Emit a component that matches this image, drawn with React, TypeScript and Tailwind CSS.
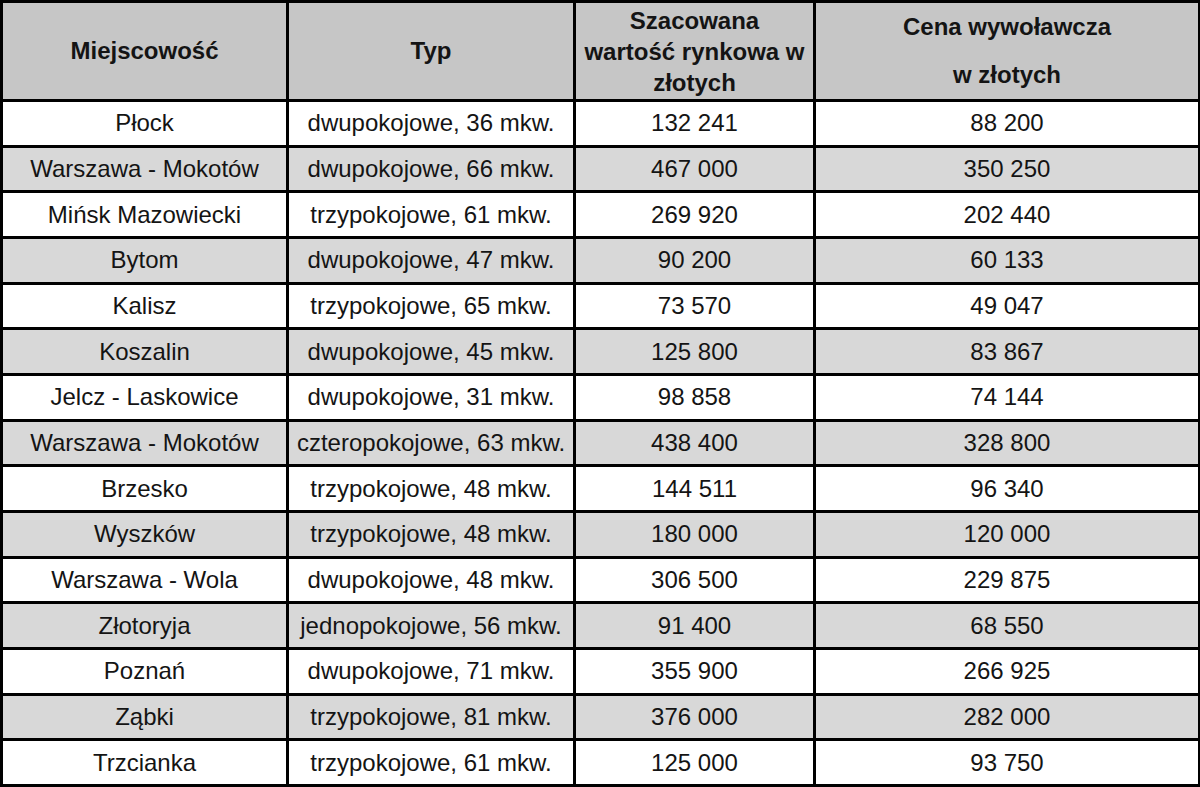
import React from "react";

const rows: [string, string, string, string][] = [
  ["Płock", "dwupokojowe, 36 mkw.", "132 241", "88 200"],
  ["Warszawa - Mokotów", "dwupokojowe, 66 mkw.", "467 000", "350 250"],
  ["Mińsk Mazowiecki", "trzypokojowe, 61 mkw.", "269 920", "202 440"],
  ["Bytom", "dwupokojowe, 47 mkw.", "90 200", "60 133"],
  ["Kalisz", "trzypokojowe, 65 mkw.", "73 570", "49 047"],
  ["Koszalin", "dwupokojowe, 45 mkw.", "125 800", "83 867"],
  ["Jelcz - Laskowice", "dwupokojowe, 31 mkw.", "98 858", "74 144"],
  ["Warszawa - Mokotów", "czteropokojowe, 63 mkw.", "438 400", "328 800"],
  ["Brzesko", "trzypokojowe, 48 mkw.", "144 511", "96 340"],
  ["Wyszków", "trzypokojowe, 48 mkw.", "180 000", "120 000"],
  ["Warszawa - Wola", "dwupokojowe, 48 mkw.", "306 500", "229 875"],
  ["Złotoryja", "jednopokojowe, 56 mkw.", "91 400", "68 550"],
  ["Poznań", "dwupokojowe, 71 mkw.", "355 900", "266 925"],
  ["Ząbki", "trzypokojowe, 81 mkw.", "376 000", "282 000"],
  ["Trzcianka", "trzypokojowe, 61 mkw.", "125 000", "93 750"],
];

const cell = "border-[3px] border-black text-center align-middle p-0";

export default function App() {
  return (
    <div className="w-[1200px] h-[787px] bg-white font-['Liberation_Sans',Arial,sans-serif] text-[24px] text-[#141414]">
      <table className="w-[1198px] table-fixed border-collapse">
        <colgroup>
          <col className="w-[286px]" />
          <col className="w-[287px]" />
          <col className="w-[240px]" />
          <col className="w-[385px]" />
        </colgroup>
        <thead>
          <tr className="h-[97px] bg-[#c6c6c6] font-bold">
            <th className={cell}>Miejscowość</th>
            <th className={cell}>Typ</th>
            <th className={`${cell} leading-[31px]`}>
              Szacowana
              <br />
              wartość rynkowa w
              <br />
              złotych
            </th>
            <th className={`${cell} align-top leading-[48px] pt-0`}>
              Cena wywoławcza
              <br />w złotych
            </th>
          </tr>
        </thead>
        <tbody>
          {rows.map((r, i) => (
            <tr key={i} className={`h-[45.67px] ${i % 2 === 1 ? "bg-[#d8d8d8]" : "bg-white"}`}>
              {r.map((v, j) => (
                <td key={j} className={cell}>
                  {v}
                </td>
              ))}
            </tr>
          ))}
        </tbody>
      </table>
    </div>
  );
}
